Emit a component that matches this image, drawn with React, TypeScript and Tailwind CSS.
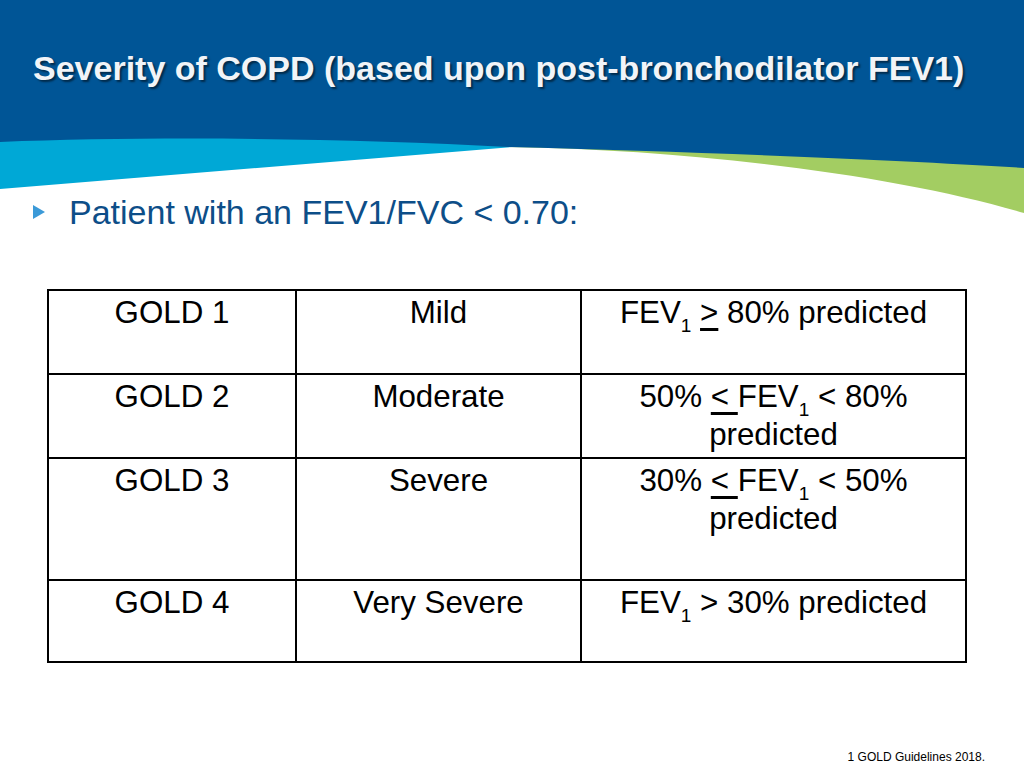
import React from 'react'

const cell = 'flex justify-center pt-[3px] text-center text-[31.3px] leading-[38px] text-black'

function Fev() {
  return (
    <>
      FEV<sub className="text-[19px] bottom-[-0.45em]">1</sub>
    </>
  )
}

export default function App() {
  return (
    <div className="relative w-[1024px] h-[768px] overflow-hidden bg-white font-['Liberation_Sans',Arial,sans-serif]">
      {/* header waves */}
      <svg
        className="absolute top-0 left-0"
        width="1024"
        height="230"
        viewBox="0 0 1024 230"
      >
        <path d="M0 128 H512 V147 L0 189 Z" fill="#00a8d6" />
        <path d="M500 128 H1024 V213 C900 176 700 150 508 147 Z" fill="#a3cd62" />
        <path
          d="M0 0 H1024 V168 C900 160 700 152 508 147 C350 138 150 136 0 142 Z"
          fill="#005596"
        />
      </svg>

      <div className="relative flex flex-col">
        <h1 className="pl-[33px] pt-[48px] text-[34px] leading-[40px] font-bold text-[#f1f4f8] [text-shadow:2px_2px_2px_rgba(0,0,0,0.5)]">
          Severity of COPD (based upon post-bronchodilator FEV1)
        </h1>

        <div className="mt-[104px] flex items-center pl-[33px]">
          <svg width="12" height="14" viewBox="0 0 12 14" className="mr-[24px]">
            <path d="M0 0 L12 7 L0 14 Z" fill="#3b9ad8" />
          </svg>
          <span className="text-[34px] leading-[40px] text-[#0d4e88]">
            Patient with an FEV1/FVC &lt; 0.70:
          </span>
        </div>

        <div className="mt-[57px] ml-[47px] w-[920px] border-2 border-black grid grid-cols-[248px_285px_383px] grid-rows-[84px_84px_122px_80px]">
          <div className={`${cell} border-r-2 border-b-2 border-black`}>GOLD 1</div>
          <div className={`${cell} border-r-2 border-b-2 border-black`}>Mild</div>
          <div className={`${cell} border-b-2 border-black`}>
            <span>
              <Fev />{' '}
              <u className="decoration-[3px] underline-offset-[5px]">&gt;</u> 80% predicted
            </span>
          </div>

          <div className={`${cell} border-r-2 border-b-2 border-black`}>GOLD 2</div>
          <div className={`${cell} border-r-2 border-b-2 border-black`}>Moderate</div>
          <div className={`${cell} border-b-2 border-black`}>
            <span>
              50% <u className="decoration-[3px] underline-offset-[5px]">&lt; </u>
              <Fev /> &lt; 80%
              <br />
              predicted
            </span>
          </div>

          <div className={`${cell} border-r-2 border-b-2 border-black`}>GOLD 3</div>
          <div className={`${cell} border-r-2 border-b-2 border-black`}>Severe</div>
          <div className={`${cell} border-b-2 border-black`}>
            <span>
              30% <u className="decoration-[3px] underline-offset-[5px]">&lt; </u>
              <Fev /> &lt; 50%
              <br />
              predicted
            </span>
          </div>

          <div className={`${cell} border-r-2 border-black`}>GOLD 4</div>
          <div className={`${cell} border-r-2 border-black`}>Very Severe</div>
          <div className={cell}>
            <span>
              <Fev /> &gt; 30% predicted
            </span>
          </div>
        </div>

        <p className="mt-[87px] pr-[39px] text-right text-[12px] leading-[14px] text-black">
          1 GOLD Guidelines 2018.
        </p>
      </div>
    </div>
  )
}
